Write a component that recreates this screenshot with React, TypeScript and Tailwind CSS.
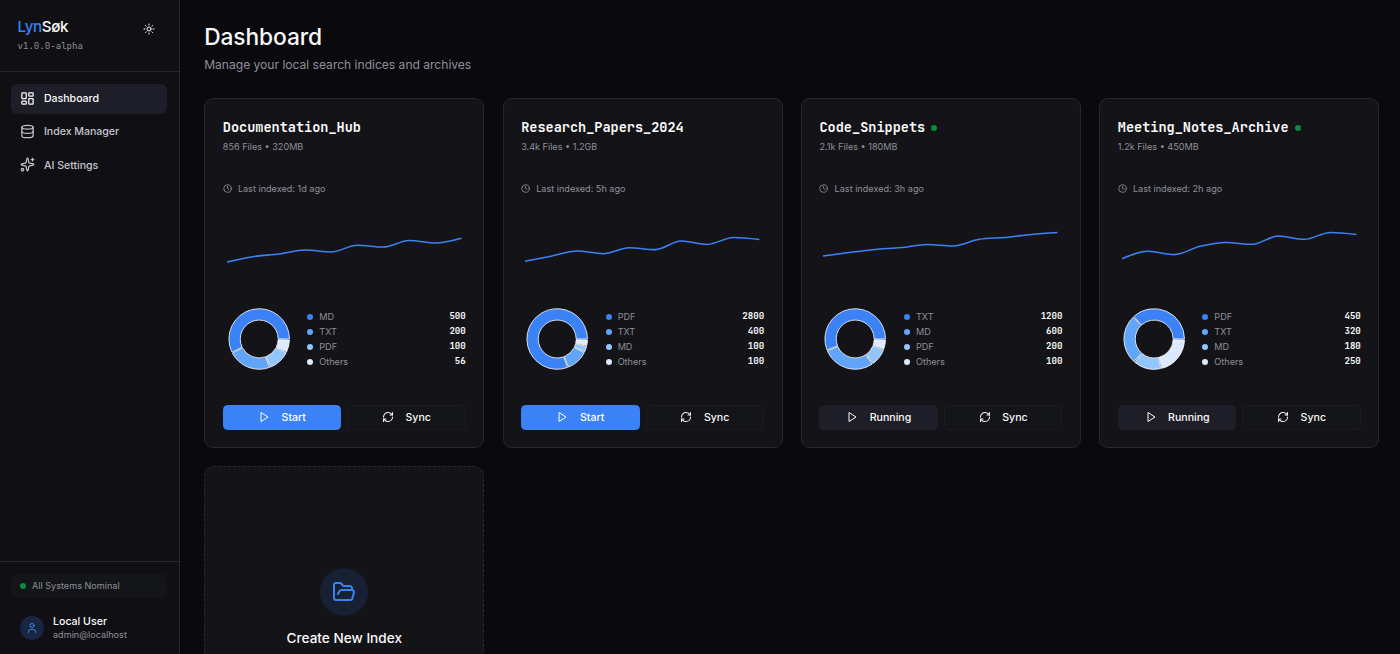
import type { ReactNode } from 'react';
import clsx from 'clsx';
import {
    Clock,
    Database,
    FolderOpen,
    LayoutDashboard,
    RefreshCw,
    Sparkles,
    Sun,
    User
} from 'lucide-react';

interface FileType {
    label: string;
    count: number;
}

interface SearchIndex {
    name: string;
    files: string;
    size: string;
    lastIndexed: string;
    running: boolean;
    trend: number[];
    types: FileType[];
}

const NAV_ITEMS = [
    { id: 'dashboard', label: 'Dashboard', icon: <LayoutDashboard size={15} strokeWidth={2} /> },
    { id: 'indices', label: 'Index Manager', icon: <Database size={15} strokeWidth={2} /> },
    { id: 'ai', label: 'AI Settings', icon: <Sparkles size={15} strokeWidth={2} /> },
];

const INDICES: SearchIndex[] = [
    {
        name: 'Documentation_Hub',
        files: '856',
        size: '320MB',
        lastIndexed: '1d ago',
        running: false,
        trend: [62, 56.7, 54, 50, 51.9, 45.3, 47, 40.4, 43, 38.3],
        types: [
            { label: 'MD', count: 500 },
            { label: 'TXT', count: 200 },
            { label: 'PDF', count: 100 },
            { label: 'Others', count: 56 },
        ],
    },
    {
        name: 'Research_Papers_2024',
        files: '3.4k',
        size: '1.2GB',
        lastIndexed: '5h ago',
        running: false,
        trend: [61.3, 56.2, 51, 53.7, 47.7, 49.6, 41, 44.4, 37.4, 39.4],
        types: [
            { label: 'PDF', count: 2800 },
            { label: 'TXT', count: 400 },
            { label: 'MD', count: 100 },
            { label: 'Others', count: 100 },
        ],
    },
    {
        name: 'Code_Snippets',
        files: '2.1k',
        size: '180MB',
        lastIndexed: '3h ago',
        running: true,
        trend: [56.1, 52.6, 49.5, 47.6, 44.4, 45.9, 39.3, 37.4, 34.4, 32.4],
        types: [
            { label: 'TXT', count: 1200 },
            { label: 'MD', count: 600 },
            { label: 'PDF', count: 200 },
            { label: 'Others', count: 100 },
        ],
    },
    {
        name: 'Meeting_Notes_Archive',
        files: '1.2k',
        size: '450MB',
        lastIndexed: '2h ago',
        running: true,
        trend: [58.7, 51.3, 54.6, 46.3, 42.5, 44.3, 36, 39.3, 32.4, 34.4],
        types: [
            { label: 'PDF', count: 450 },
            { label: 'TXT', count: 320 },
            { label: 'MD', count: 180 },
            { label: 'Others', count: 250 },
        ],
    },
];

const SLICE_COLORS = ['#3b82f6', '#60a5fa', '#93c5fd', '#dbeafe'];
const DOT_CLASSES = ['bg-[#3b82f6]', 'bg-[#60a5fa]', 'bg-[#93c5fd]', 'bg-[#dbeafe]'];

const STEP = 26.05;
const START_X = 4;

// Monotone cubic through evenly spaced points
const monotonePath = (ys: number[]) => {
    const slopes = ys.slice(1).map((y, i) => (y - ys[i]) / STEP);
    const tangents = ys.map((_, i) => {
        if (i === 0 || i === ys.length - 1) return 0;
        const a = slopes[i - 1];
        const b = slopes[i];
        return (Math.sign(a) + Math.sign(b)) * Math.min(Math.abs(a), Math.abs(b), 0.25 * Math.abs(a + b));
    });
    tangents[0] = (3 * slopes[0] - tangents[1]) / 2;
    tangents[ys.length - 1] = (3 * slopes[slopes.length - 1] - tangents[ys.length - 2]) / 2;

    let d = `M${START_X},${ys[0]}`;
    for (let i = 0; i < ys.length - 1; i++) {
        const x0 = START_X + i * STEP;
        const x1 = x0 + STEP;
        const h = STEP / 3;
        d += `C${x0 + h},${ys[i] + tangents[i] * h},${x1 - h},${ys[i + 1] - tangents[i + 1] * h},${x1},${ys[i + 1]}`;
    }
    return d;
};

const Sparkline = ({ values }: { values: number[] }) => (
    <svg width="242" height="91" viewBox="0 0 242 91" className="block">
        <path d={monotonePath(values)} fill="none" stroke="#3b82f6" strokeWidth={1.55} />
    </svg>
);

const PADDING_ANGLE = (2 * Math.PI) / 180;

const Donut = ({ types }: { types: FileType[] }) => {
    const total = types.reduce((sum, t) => sum + t.count, 0);
    const available = Math.PI * 2 - types.length * PADDING_ANGLE;
    const outer = 30.3;
    const inner = 18.95;
    const point = (r: number, angle: number) => `${36.2 + r * Math.cos(angle)},${36 - r * Math.sin(angle)}`;
    let angle = 0;

    return (
        <svg width="72" height="72" viewBox="0 0 72 72" className="block shrink-0">
            {types.map((type, i) => {
                const from = angle;
                const to = angle + (type.count / total) * available;
                angle = to + PADDING_ANGLE;
                const large = to - from > Math.PI ? 1 : 0;
                return (
                    <path
                        key={type.label}
                        d={`M${point(outer, from)}A${outer},${outer},0,${large},0,${point(outer, to)}L${point(inner, to)}A${inner},${inner},0,${large},1,${point(inner, from)}Z`}
                        fill={SLICE_COLORS[i]}
                        stroke="#fff"
                        strokeWidth={0.8}
                    />
                );
            })}
        </svg>
    );
};

const PlayIcon = () => (
    <svg width="12" height="12" viewBox="0 0 24 24" fill="none" stroke="currentColor" strokeWidth="2" strokeLinejoin="round">
        <polygon points="6 3 20 12 6 21 6 3" />
    </svg>
);

interface CardButtonProps {
    variant: 'primary' | 'secondary' | 'outline';
    icon: ReactNode;
    children: ReactNode;
}

const CardButton = ({ variant, icon, children }: CardButtonProps) => (
    <button
        type="button"
        className={clsx(
            'flex h-[24.5px] flex-1 items-center justify-center gap-[11.5px] rounded-[4.5px] border text-[10.6px] font-medium',
            variant === 'primary' && 'border-[#3b82f6] bg-[#3b82f6] text-white',
            variant === 'secondary' && 'border-[#1e1e28] bg-[#1e1e28] text-[#fafafa]',
            variant === 'outline' && 'border-[#1c1c22] bg-[#131519] text-[#fafafa]'
        )}
    >
        {icon}
        <span className="pt-px">{children}</span>
    </button>
);

const IndexCard = ({ index }: { index: SearchIndex }) => (
    <article className="h-[350px] rounded-[9px] border border-[#27272f] bg-[#141418] px-[17.6px] pt-[18px]">
        <div className="flex h-[21px] items-center gap-[6px]">
            <h3 className="font-['JetBrains_Mono','DejaVu_Sans_Mono',monospace] text-[13.55px] font-bold whitespace-nowrap text-[#fafafa]">
                {index.name}
            </h3>
            {index.running && <span className="size-[6px] rounded-full bg-[#0c8a3e]" />}
        </div>
        <p className="mt-[2px] text-[9.1px] leading-[13px] text-[#8f8f99]">
            {index.files} Files • {index.size}
        </p>
        <div className="mt-[29px] flex items-center gap-[6px] text-[9.1px] leading-[13px] text-[#8f8f99]">
            <Clock size={9.1} strokeWidth={2.2} />
            <span>Last indexed: {index.lastIndexed}</span>
        </div>

        <div className="mt-[5px]">
            <Sparkline values={index.trend} />
        </div>

        <div className="mt-[12px] flex items-center">
            <Donut types={index.types} />
            <ul className="ml-[12.5px] flex-1">
                {index.types.map((type, i) => (
                    <li key={type.label} className="flex h-[15px] items-center text-[9.1px] leading-[13px]">
                        <span className={clsx('mr-[6px] size-[6px] rounded-full', DOT_CLASSES[i])} />
                        <span className="text-[#8f8f99]">{type.label}</span>
                        <span className="ml-auto font-['JetBrains_Mono','DejaVu_Sans_Mono',monospace] font-bold text-[#fafafa]">
                            {type.count}
                        </span>
                    </li>
                ))}
            </ul>
        </div>

        <div className="mt-[30px] flex gap-[6px]">
            <CardButton variant={index.running ? 'secondary' : 'primary'} icon={<PlayIcon />}>
                {index.running ? 'Running' : 'Start'}
            </CardButton>
            <CardButton variant="outline" icon={<RefreshCw size={12} strokeWidth={2.1} />}>
                Sync
            </CardButton>
        </div>
    </article>
);

const Sidebar = () => (
    <aside className="flex w-[180px] shrink-0 flex-col border-r border-[#27272f] bg-[#101014]">
        <header className="flex h-[72px] items-start justify-between border-b border-[#27272f] pt-[17px] pr-[24px] pl-[17.5px]">
            <div>
                <h1 className="text-[15.2px] leading-[19px] font-medium tracking-[-0.38px] text-[#fafafa]">
                    <span className="text-[#3b82f6]">Lyn</span>Søk
                </h1>
                <p className="mt-[4px] font-['JetBrains_Mono','DejaVu_Sans_Mono',monospace] text-[9.1px] leading-[13px] text-[#8f8f99]">
                    v1.0.0-alpha
                </p>
            </div>
            <Sun size={12} className="mt-[5.5px] text-[#fafafa]" />
        </header>

        <nav className="flex flex-1 flex-col gap-[3px] pt-[11.5px] pr-[12px] pl-[11px]">
            {NAV_ITEMS.map((item, i) => (
                <a
                    key={item.id}
                    className={clsx(
                        'flex h-[30.2px] items-center gap-[9px] rounded-[6px] px-[9px] text-[10.6px] font-medium tracking-[-0.03px]',
                        i === 0 ? 'bg-[#1e1e28] text-[#fafafa]' : 'text-[#c4c4cb]'
                    )}
                >
                    {item.icon}
                    <span className="pt-px">{item.label}</span>
                </a>
            ))}
        </nav>

        <footer className="h-[93px] border-t border-[#27272f] pt-3 pr-[12px] pl-[11px]">
            <div className="flex h-[24px] items-center gap-[6px] rounded-[6px] bg-[#131519] px-[9px] text-[9.1px] text-[#8f8f99]">
                <span className="size-[6px] rounded-full bg-[#0c8a3e]" />
                All Systems Nominal
            </div>
            <div className="mt-[16px] flex items-center gap-[9px] pl-[9px]">
                <div className="flex size-6 items-center justify-center rounded-full bg-[#182640] text-[#3b82f6]">
                    <User size={12} />
                </div>
                <div className="pt-px">
                    <p className="text-[10.6px] leading-[14px] font-medium text-[#fafafa]">Local User</p>
                    <p className="text-[9.1px] leading-[12px] text-[#8f8f99]">admin@localhost</p>
                </div>
            </div>
        </footer>
    </aside>
);

export default function App() {
    return (
        <div className="flex h-screen overflow-hidden bg-[#09090e] font-['Inter',sans-serif]">
            <Sidebar />
            <main className="flex-1 overflow-hidden pt-[23px] pr-[20.6px] pl-[24.2px]">
                <h2 className="text-[22.75px] leading-[28px] font-medium tracking-[-0.1px] text-[#fafafa]">Dashboard</h2>
                <p className="mt-[5px] text-[12.1px] leading-[18px] tracking-[-0.02px] text-[#8f8f99]">
                    Manage your local search indices and archives
                </p>
                <div className="mt-[24px] grid grid-cols-4 gap-[18.2px]">
                    {INDICES.map(index => (
                        <IndexCard key={index.name} index={index} />
                    ))}
                    <button
                        type="button"
                        className="flex h-[303px] flex-col items-center rounded-[9px] border border-dashed border-[#27272f] bg-[#141418] pt-[101px]"
                    >
                        <span className="flex size-12 items-center justify-center rounded-full bg-[#182033] text-[#3b82f6]">
                            <FolderOpen size={24} />
                        </span>
                        <span className="mt-[13px] text-[13.6px] leading-[19px] font-medium text-[#fafafa]">
                            Create New Index
                        </span>
                    </button>
                </div>
            </main>
        </div>
    );
}
